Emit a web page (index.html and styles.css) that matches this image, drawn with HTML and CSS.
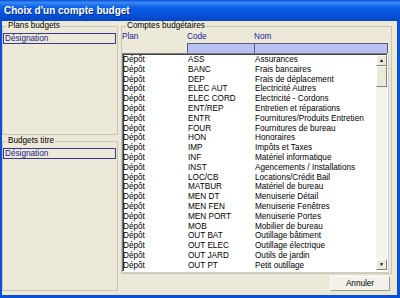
FILE: index.html
```html
<!DOCTYPE html>
<html lang="fr">
<head>
    <meta charset="UTF-8">
    <title>Choix d'un compte budget</title>
    <link rel="stylesheet" href="styles.css">
</head>
<body>
    <div class="window">
        <div class="titlebar">Choix d'un compte budget</div>
        <div class="client">
            <div class="left-col">
                <fieldset class="group plans">
                    <legend>Plans budgets</legend>
                    <div class="field">Désignation</div>
                </fieldset>
                <fieldset class="group titres">
                    <legend>Budgets titre</legend>
                    <div class="field">Désignation</div>
                </fieldset>
            </div>
            <div class="right-col">
                <fieldset class="group comptes">
                    <legend>Comptes budgétaires</legend>
                    <div class="col-heads">
                        <span class="c-plan">Plan</span>
                        <span class="c-code">Code</span>
                        <span class="c-nom">Nom</span>
                    </div>
                    <div class="filters">
                        <span class="c-plan"></span>
                        <div class="filter c-code"></div>
                        <div class="filter c-nom"></div>
                    </div>
                    <div class="list">
                        <div class="rows" id="rows"></div>
                        <div class="scrollbar">
                            <div class="sb-btn">&#9650;</div>
                            <div class="sb-thumb"></div>
                            <div class="sb-track"></div>
                            <div class="sb-btn">&#9660;</div>
                        </div>
                    </div>
                </fieldset>
                <div class="actions">
                    <button class="btn">Annuler</button>
                </div>
            </div>
        </div>
    </div>

    <script>
        const comptes = [
            ['ASS', 'Assurances'],
            ['BANC', 'Frais bancaires'],
            ['DEP', 'Frais de déplacement'],
            ['ELEC AUT', 'Electricité Autres'],
            ['ELEC CORD', 'Electricité - Cordons'],
            ['ENT/REP', 'Entretien et réparations'],
            ['ENTR', 'Fournitures/Produits Entretien'],
            ['FOUR', 'Fournitures de bureau'],
            ['HON', 'Honoraires'],
            ['IMP', 'Impôts et Taxes'],
            ['INF', 'Matériel informatique'],
            ['INST', 'Agencements / Installations'],
            ['LOC/CB', 'Locations/Crédit Bail'],
            ['MATBUR', 'Matériel de bureau'],
            ['MEN DT', 'Menuiserie Détail'],
            ['MEN FEN', 'Menuiserie Fenêtres'],
            ['MEN PORT', 'Menuiserie Portes'],
            ['MOB', 'Mobilier de bureau'],
            ['OUT BAT', 'Outillage bâtiment'],
            ['OUT ELEC', 'Outillage électrique'],
            ['OUT JARD', 'Outils de jardin'],
            ['OUT PT', 'Petit outillage']
        ];

        const rows = document.getElementById('rows');
        comptes.forEach(function(c) {
            const row = document.createElement('div');
            row.className = 'row';
            row.innerHTML = '<span class="c-plan">Dépôt</span>' +
                '<span class="c-code">' + c[0] + '</span>' +
                '<span class="c-nom">' + c[1] + '</span>';
            rows.appendChild(row);
        });
    </script>
</body>
</html>
```

FILE: styles.css
```css
body {
    margin: 0;
    font-family: "Liberation Sans", Arial, sans-serif;
    font-size: 8.2px;
    color: #000;
}
.window {
    width: 400px;
    height: 298px;
    box-sizing: border-box;
    display: flex;
    flex-direction: column;
    background-color: #0a4fd8;
    padding: 0 3px 4px 2px;
}
.titlebar {
    height: 21px;
    margin: 0 -3px 0 -2px;
    padding-left: 4px;
    line-height: 21px;
    font-size: 10px;
    font-weight: bold;
    color: #fff;
    background: linear-gradient(#0850d8, #3a88f2 12%, #0c5fe8 35%, #054fd8 75%, #0645c0);
    text-shadow: 1px 1px 0 #0a2e8a;
}
.client {
    flex: 1;
    display: flex;
    background-color: #ece9d8;
    padding: 0 0 4px 0;
}
.left-col {
    width: 116px;
    display: flex;
    flex-direction: column;
}
.right-col {
    flex: 1;
    display: flex;
    flex-direction: column;
    margin-left: 3px;
}
.group {
    margin: 0;
    padding: 0;
    border: 1px solid #c8c5b4;
    min-width: 0;
}
.group legend {
    margin-left: 4px;
    padding: 0 1px;
    height: 10px;
    line-height: 10px;
}
.plans {
    height: 114px;
    box-sizing: border-box;
}
.titres {
    margin-top: 1px;
    flex: 1;
}
.field {
    margin: 2px 1px 0 0;
    height: 9px;
    line-height: 9px;
    padding-left: 1px;
    border: 1px solid #3a3a8c;
    color: #1c1c8c;
}
.comptes {
    height: 253px;
    box-sizing: border-box;
    margin-right: 5px;
    display: flex;
    flex-direction: column;
}
.col-heads,
.filters,
.row {
    display: flex;
}
.c-plan {
    width: 65px;
    flex: none;
}
.c-code {
    width: 67px;
    flex: none;
}
.c-nom {
    flex: 1;
}
.col-heads {
    height: 12px;
    padding-top: 1px;
    box-sizing: border-box;
    line-height: 9px;
    color: #1c1c9a;
}
.filters {
    height: 10px;
    margin-right: 3px;
}
.filter {
    box-sizing: border-box;
    background-color: #b9c0f2;
    border-top: 1px solid #5b5b7c;
    border-left: 1px solid #5b5b7c;
}
.filters .c-code {
    width: 67px;
}
.filters .c-nom {
    border-right: 1px solid #5b5b7c;
}
.list {
    flex: 1;
    display: flex;
    background-color: #fff;
    margin-right: 3px;
    border-top: 1px solid #808080;
    border-left: 1px solid #808080;
    border-right: 1px solid #fff;
    border-bottom: 1px solid #fff;
    box-shadow: inset 1px 1px 0 #404040, 1px 1px 0 #d4d0c8;
    overflow: hidden;
}
.rows {
    flex: 1;
    padding-top: 1px;
    overflow: hidden;
}
.row {
    height: 9.8px;
    line-height: 10px;
    white-space: nowrap;
}
.scrollbar {
    width: 11px;
    display: flex;
    flex-direction: column;
    background-color: #f4f3ec;
    margin: 1px 0 1px 0;
}
.sb-btn {
    height: 11px;
    box-sizing: border-box;
    background-color: #ece9d8;
    border: 1px solid;
    border-color: #fff #808080 #808080 #fff;
    font-size: 5px;
    line-height: 9px;
    text-align: center;
}
.sb-thumb {
    height: 21px;
    box-sizing: border-box;
    background-color: #ece9d8;
    border: 1px solid;
    border-color: #fff #808080 #808080 #fff;
}
.sb-track {
    flex: 1;
}
.actions {
    display: flex;
    justify-content: flex-end;
    padding: 2px 7px 0 0;
}
.btn {
    width: 60px;
    height: 15px;
    padding: 0;
    font-family: "Liberation Sans", Arial, sans-serif;
    font-size: 8.2px;
    color: #000;
    background-color: #f2f1ea;
    border: 1px solid;
    border-color: #fff #9c9a8e #9c9a8e #fff;
    border-radius: 1px;
}
```
